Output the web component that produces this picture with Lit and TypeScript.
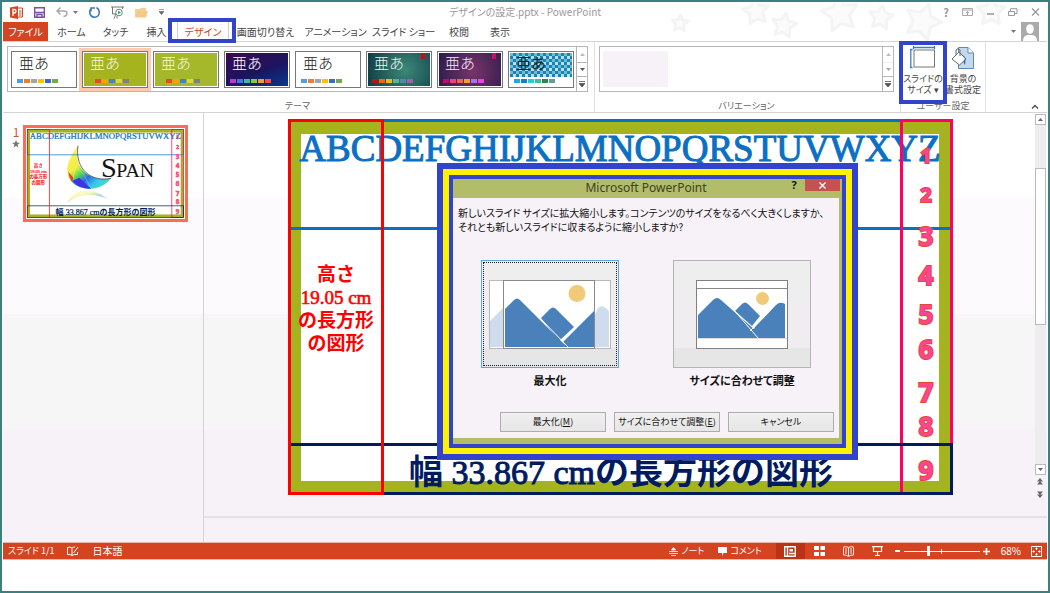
import { LitElement, html, css, svg } from 'lit';
import { customElement, property, state } from 'lit/decorators.js';
import { classMap } from 'lit/directives/class-map.js';
import { styleMap } from 'lit/directives/style-map.js';

const uiFont = css`'Noto Sans CJK JP', 'Noto Sans', sans-serif`;

const reset = css`
  *, *::before, *::after { box-sizing: border-box; }
  button {
    font: inherit; color: inherit; background: none; border: 0; padding: 0; margin: 0;
    display: flex; align-items: center; justify-content: center; white-space: nowrap;
  }
  svg { display: block; flex: none; }
`;

/* ---------- Slide ---------- */

const digits: [string, number][] = [
  ['1', 156], ['2', 195], ['3', 237], ['4', 276], ['5', 315], ['6', 350], ['7', 393], ['8', 427], ['9', 471],
];
const heightLabel: [string, number][] = [
  ['高さ', 281], ['19.05 cm', 304], ['の長方形', 327], ['の図形', 350],
];

@customElement('slide-view')
class SlideView extends LitElement {
  static styles = css`
    :host { display: block; }
    svg { display: block; width: 100%; height: auto; }
    .alphabet { font: 37px 'Liberation Serif', serif; fill: #0b70c4; stroke: #0b70c4; stroke-width: 1; }
    .tall { font: bold 19px 'Liberation Serif', 'Noto Sans CJK JP', serif; fill: #f00; }
    .wide { font: bold 34px 'Liberation Serif', 'Noto Sans CJK JP', serif; fill: #001b60; }
    .tall.latin { font-weight: normal; stroke: #f00; stroke-width: .6; }
    .latin { font-weight: normal; stroke: #001b60; stroke-width: 1; }
    .digit { font: bold 26px 'Noto Sans', sans-serif; fill: #ff4496; stroke: #e2492d; stroke-width: 2; paint-order: stroke; }
    .digit.small { font-size: 20px; }
    .word { font: 84px 'Liberation Serif', serif; fill: #111; }
    .mid { text-anchor: middle; }
  `;
  render() {
    return html`<svg viewBox="288 119 665 376" role="img" aria-label="スライド 1">
      <defs>
        <linearGradient id="moon" x1="0" y1="0" x2="1" y2="1">
          <stop offset="0" stop-color="#fff27a" /><stop offset=".35" stop-color="#f2ec3c" />
          <stop offset=".47" stop-color="#58d84a" /><stop offset=".6" stop-color="#2a6be8" />
          <stop offset=".75" stop-color="#36c8f0" /><stop offset="1" stop-color="#4af08c" />
        </linearGradient>
      </defs>
      <rect x="290" y="121" width="661" height="372" fill="#a5b41e" />
      <rect x="301" y="134" width="638" height="347" fill="#fff" />
      <path d="M504 190 C440 270 440 350 530 370 C580 380 620 358 644 328 C560 345 480 290 504 190Z" fill="url(#moon)" />
      <path d="M478 345 L496 278 L530 315 L560 372" stroke="#fff" stroke-width="2" fill="none" opacity=".6" />
      <path d="M463 300 L484 326 L480 346 Q465 325 463 300Z" fill="#f0372a" />
      <path d="M480 338 L510 325 L560 372 C525 372 495 360 480 338Z" fill="#3a35e8" />
      <path d="M504 190 C490 290 560 345 644 328" fill="none" stroke="#333" stroke-width="3" />
      <path d="M460 432 C480 366 580 366 630 418 C570 386 510 392 460 432Z" fill="url(#moon)" opacity=".35" />
      <text class="word" x="602" y="321"><tspan font-size="120">S</tspan></text>
      <text class="word" x="666" y="321">PAN</text>
      <rect x="289.5" y="120.5" width="662" height="108" fill="none" stroke="#0b70c4" stroke-width="3" />
      <text class="alphabet mid" x="620" y="161">ABCDEFGHIJKLMNOPQRSTUVWXYZ</text>
      <rect x="901.5" y="120.5" width="50" height="373" fill="none" stroke="#ff0066" stroke-width="3" />
      ${digits.map(([d, y], i) => svg`<text class=${i < 2 ? 'digit small mid' : 'digit mid'} x="926" y=${i < 2 ? y + 7 : y + 9}>${d}</text>`)}
      <rect x="289.5" y="444.5" width="662" height="49" fill="none" stroke="#001b60" stroke-width="3" />
      <text class="wide mid" x="621" y="484">幅<tspan class="latin"> 33.867 cm</tspan>の長方形の図形</text>
      <rect x="289.5" y="120.5" width="93" height="373" fill="none" stroke="#f00" stroke-width="3" />
      ${heightLabel.map(([t, y]) => svg`<text class=${/\d/.test(t) ? 'tall latin mid' : 'tall mid'} x="336" y=${y}>${t}</text>`)}
    </svg>`;
  }
}

/* ---------- Scaling dialog ---------- */

const peaks = svg`
  <path d="M0 58 V35 L15 20 Q19 16 23 20 L66 58Z" fill="#4a81bb" />
  <path d="M37 31 L44 24 Q47 21 50 24 L62 36 L54 46Z" fill="#4a81bb" />
  <path d="M52 58 L57 47 L78 25 Q82 21 87 24 V58Z" fill="#4a81bb" />
  <path d="M35 29 L60 58 M52 51 L72 31" stroke="#fff" stroke-width="1" fill="none" />`;

@customElement('size-dialog')
class SizeDialog extends LitElement {
  @state() private choice = 'max';
  static styles = [reset, css`
    :host { display: block; font: 11px/14px ${uiFont}; font-feature-settings: 'palt'; color: #111; }
    .b1 { border: 6px solid #3344cc; }
    .b2 { border: 6px solid #fff200; }
    .b3 { border: 4px solid #3344cc; }
    .win { background: #b3bd69; padding: 0 3px 6px 0; }
    header { display: grid; grid-template-columns: 1fr auto 1fr; height: 19px; color: #3c3f26; font: 12px/18px 'Noto Sans', sans-serif; }
    header h2 { grid-column: 2; margin: 0; font: inherit; }
    .caps { display: flex; justify-content: flex-end; align-items: flex-start; gap: 4px; margin-right: -1px; }
    .help { width: 14px; height: 12px; font-weight: bold; font-size: 11px; color: #111; }
    .close { width: 35px; height: 12px; background: #c75050; color: #fff; }
    .body { background: #f7f2f7; padding: 8px 5px 6px; }
    p { margin: 0; height: 54px; font-size: 10px; white-space: nowrap; }
    .choices { display: grid; grid-template-columns: 138px 138px; justify-content: center; gap: 54px; }
    .choice { display: flex; flex-direction: column; align-items: center; gap: 5px; font-weight: bold; }
    .pic { width: 138px; height: 108px; border: 1px solid #b4b4b4; background: linear-gradient(#eee 0 25%, #f0edf0 50% 82%, #e6e6e6 82%); }
    .pic.on { border-color: #5aa8ea; outline: 1px dotted #222; outline-offset: -3px; }
    .actions { display: grid; grid-template-columns: repeat(3, 106px); justify-content: end; gap: 8px; margin-top: 25px; }
    .actions button { height: 20px; border: 1px solid #adadad; background: linear-gradient(#f0f0f0, #e6e6e6); font-size: 9px; }
  `];
  render() {
    return html`<div class="b1"><div class="b2"><div class="b3"><div class="win" role="dialog" aria-labelledby="t">
      <header>
        <h2 id="t">Microsoft PowerPoint</h2>
        <div class="caps">
          <button class="help" aria-label="ヘルプ">?</button>
          <button class="close" aria-label="閉じる"><svg width="7" height="7" viewBox="0 0 7 7"><path d="M.5 .5 6.500 6.500M6.500 .5 .5 6.500" stroke="#fff" stroke-width="1.400" /></svg></button>
        </div>
      </header>
      <div class="body">
        <p>新しいスライド サイズに拡大縮小します。コンテンツのサイズをなるべく大きくしますか、<br />それとも新しいスライドに収まるように縮小しますか?</p>
        <div class="choices">
          <div class="choice">
            <button class=${classMap({ pic: true, on: this.choice === 'max' })} aria-labelledby="c1" @click=${() => (this.choice = 'max')}>
              <svg width="122" height="69" viewBox="0 0 122 69">
                <rect x=".5" y=".5" width="121" height="68" fill="#fff" stroke="#b9b9b9" />
                <path d="M1 67V41L15 27V67ZM106 67V34L109 28Q113 24 118 29L120 31V67Z" fill="#cfdcee" />
                <rect x="14.500" y=".5" width="91" height="68" fill="#fff" stroke="#8a8a8a" />
                <circle cx="88" cy="13.500" r="8.500" fill="#f0ca78" />
                <path d="M16 67V29L25 20Q28 17 31 20L78 67Z" fill="#4a81bb" />
                <path d="M52 38 61 29Q64 26 67 29L85 47 70 61Z" fill="#4a81bb" />
                <path d="M74 62 105 31V67H77Z" fill="#4a81bb" />
                <path d="M49 36 80 68M73 62 88 47" stroke="#fff" stroke-width="1" />
              </svg>
            </button>
            <span id="c1">最大化</span>
          </div>
          <div class="choice">
            <button class=${classMap({ pic: true, on: this.choice === 'fit' })} aria-labelledby="c2" @click=${() => (this.choice = 'fit')}>
              <svg width="92" height="69" viewBox="0 0 92 69">
                <rect x=".5" y=".5" width="91" height="68" fill="#fff" stroke="#808080" />
                <path d="M1 8.500H91" stroke="#888" /><path d="M1 58.500H91" stroke="#ddd" />
                <circle cx="66.500" cy="18.500" r="6.500" fill="#f0ca78" />
                <g transform="translate(2 0)">${peaks}</g>
              </svg>
            </button>
            <span id="c2">サイズに合わせて調整</span>
          </div>
        </div>
        <div class="actions">
          <button><span>最大化(<u>M</u>)</span></button>
          <button><span>サイズに合わせて調整(<u>E</u>)</span></button>
          <button>キャンセル</button>
        </div>
      </div>
    </div></div></div></div>`;
  }
}

/* ---------- Ribbon galleries ---------- */

interface Theme { name: string; paper: string; ink: string; colors: string[]; inset?: boolean; tag?: string; on?: boolean; }
const office = ['#5b9bd5', '#ed7d31', '#a5a5a5', '#ffc000', '#3f68c8', '#70ad47'];
const span = ['#e84c22', '#ffa000', '#3f83c8', '#d8d83c', '#808080'];
const themes: Theme[] = [
  { name: 'Office', paper: '#fff', ink: '#222', colors: office },
  { name: 'Span', paper: '#a5b41e', ink: '#f4f6dc', colors: span, inset: true, on: true },
  { name: 'Basis', paper: '#a5b82a', ink: '#f4f6dc', colors: span, inset: true },
  { name: 'Ion', paper: 'linear-gradient(160deg, #3a0a50, #1c1460 55%, #063a8c)', ink: '#fff', colors: ['#b83cc8', '#3f78d8', '#3cb8a0', '#8cc83c', '#f0a028', '#f05038'] },
  { name: 'White', paper: '#fff', ink: '#222', colors: office },
  { name: 'Ion Green', paper: 'radial-gradient(circle at 60% 50%, #3c8878, #0f3c46)', ink: '#e8f4f0', colors: ['#b81414', '#f06414', '#f0b428', '#64b090', '#5088a8', '#a060a8'], tag: '#c01010' },
  { name: 'Ion Boardroom', paper: 'radial-gradient(circle at 55% 55%, #78346c, #2a1c48)', ink: '#f4e8f4', colors: ['#b81064', '#f04080', '#f06440', '#f09c30', '#a070f8', '#f040e0'], tag: '#c01068' },
  { name: 'Integral', paper: 'conic-gradient(#1884b0 25%, #b8e0f0 0 50%, #1884b0 0 75%, #70bcd8 0) 0 0 / 6px 6px', ink: '#10242c', colors: ['#20a8e8', '#1880c8', '#20d0d8', '#40c090', '#308848', '#60a098'] },
];

@customElement('gallery-box')
class GalleryBox extends LitElement {
  @property({ attribute: false }) themes: Theme[] = [];
  @property({ type: Boolean }) empty = false;
  static styles = [reset, css`
    :host { display: flex; height: 46px; border: 1px solid #b6b6b6; background: #fff; }
    .list { display: flex; flex: 1; gap: 5px; padding: 0 0 0 3px; align-items: center; }
    .theme { position: relative; width: 66px; height: 37px; border: 1px solid #777; padding: 1px; }
    .theme.on { outline: 3px solid #fbcbb0; }
    .paper { width: 100%; height: 100%; display: flex; flex-direction: column; align-items: flex-start; padding: 1px 5px 0 6px; }
    .paper.pattern { height: 24px; align-self: flex-start; }
    .sample { font: 300 15px/17px 'Noto Sans CJK JP', sans-serif; }
    .pattern .sample { font-weight: 400; }
    .dots { position: absolute; left: 5px; bottom: 4px; display: flex; gap: 1px; }
    .dots.inset { left: 12px; }
    .dots i { width: 6px; height: 4px; }
    .tag { position: absolute; right: 6px; top: 1px; width: 4px; height: 6px; }
    .scroll { display: grid; grid-template-rows: 1fr 1fr 1fr; width: 11px; border-left: 1px solid #b6b6b6; }
    .scroll button + button { border-top: 1px solid #b6b6b6; }
    .scroll.off button:nth-child(2) { border-color: #e0e0e0; opacity: .5; }
    .ghost { width: 65px; height: 36px; background: #f7f2f7; }
  `];
  render() {
    return html`
      <div class="list">
        ${this.empty
          ? html`<div class="ghost"></div>`
          : this.themes.map((t) => html`
            <button class=${classMap({ theme: true, on: !!t.on })} aria-label=${t.name}>
              <span class=${classMap({ paper: true, pattern: t.name === 'Integral' })} style=${styleMap({ background: t.paper, color: t.ink })}>
                <span class="sample">亜あ</span>
              </span>
              <span class=${classMap({ dots: true, inset: !!t.inset })}>${t.colors.map((c) => html`<i style=${styleMap({ background: c })}></i>`)}</span>
              ${t.tag ? html`<span class="tag" style=${styleMap({ background: t.tag })}></span>` : ''}
            </button>`)}
      </div>
      <div class=${classMap({ scroll: true, off: this.empty })}>
        <button aria-label="前の行"><svg width="5" height="3"><path d="M0 3 2.500 0 5 3Z" fill="#bbb" /></svg></button>
        <button aria-label="次の行"><svg width="5" height="3"><path d="M0 0 2.500 3 5 0Z" fill="#555" /></svg></button>
        <button aria-label="その他"><svg width="6" height="6"><path d="M0 .5H6M0 2.500 3 6 6 2.500Z" stroke="#555" stroke-width=".8" fill="#555" /></svg></button>
      </div>`;
  }
}

/* ---------- Application ---------- */

const star = (x: number, y: number, s: number, r: number) => svg`
  <path transform="translate(${x} ${y}) rotate(${r}) scale(${s})" stroke-width=${3 / s} stroke-linejoin="round"
    d="M0-10 3-4 10-3 5 2 6 9 0 6-6 9-5 2-10-3-3-4Z" />`;

@customElement('app-root')
class AppRoot extends LitElement {
  @state() private zoom = 32;
  static styles = [reset, css`
    :host { display: block; font: 11px/14px ${uiFont}; font-feature-settings: 'palt'; color: #444; }
    .frame { position: relative; display: flex; flex-direction: column; min-height: 100vh; border: 2px solid #3b8080; padding: 0 1px; background: #fff; }
    .stars { position: absolute; top: 1px; right: 20px; width: 380px; height: 39px; fill: #fbfbfb; stroke: #f4f4f4; }

    .title { position: relative; display: grid; grid-template-columns: 1fr auto 1fr; align-items: center; height: 20px; }
    .title h1 { margin: 0; font: inherit; font-size: 10px; color: #999; }
    .quick { display: flex; align-items: center; gap: 11px; padding-left: 7px; }
    .undo { gap: 5px; }
    .caption { display: flex; align-items: center; justify-content: flex-end; gap: 13px; padding-right: 7px; color: #999; }

    .tabs { position: relative; display: flex; justify-content: space-between; height: 19px; z-index: 1; }
    nav { display: grid; grid-template-columns: 45px 47px 41px 41px 52px 73px 67px 69px 42px 40px; font-size: 10px; }
    nav .file { background: #d44420; color: #fff; }
    nav .on { color: #d44420; border: solid #d0d0d0; border-width: 0 1px; }
    .user { display: flex; align-items: center; gap: 5px; padding-right: 8px; background: #fff; }
    .mark { position: absolute; border: 4px solid #3344cc; pointer-events: none; }
    .mark.tab { left: 165px; top: -4px; width: 68px; height: 25px; }
    .mark.size { left: -2px; top: -1px; width: 48px; height: 63px; }

    .ribbon { display: flex; border-top: 1px solid #d4d4d4; border-bottom: 1px solid #d4d4d4; height: 72px; color: #555; font-size: 10px; position: relative; }
    .group { display: flex; flex-direction: column; justify-content: space-between; padding: 4px 6px 0 4px; border-right: 1px solid #e1e1e1; }
    .group.themes { width: 592px; }
    .group.variants { flex: 1; }
    .group.custom { width: 85px; padding: 0 2px; position: relative; }
    .name { text-align: center; line-height: 13px; color: #666; font-size: 9px; }
    .big { display: flex; color: #444; font-size: 9px; }
    .big button { flex-direction: column; justify-content: flex-start; gap: 3px; width: 40px; padding-top: 4px; line-height: 11px; }
    .big svg.icon { height: 24px; }
    .fold { width: 61px; display: flex; justify-content: flex-end; align-items: flex-end; padding: 0 8px 3px 0; }

    .work { flex: 1; display: flex; min-height: 0; background: linear-gradient(#fff 0 85px, #fdfafd 85px 201px, #f6f6f6 201px 316px, #f7f2f7 316px); }
    aside { width: 201px; border-right: 1px solid #d6d3d6; display: flex; align-items: flex-start; gap: 2px; padding: 12px 15px 0 8px; }
    .num { width: 10px; font-size: 12px; color: #e0502e; text-align: center; display: grid; justify-items: center; gap: 1px; }
    .thumb { flex: 1; border: 3px solid #f76e50; padding: 1px; background: #fff; }
    .stage { flex: 1; display: flex; flex-direction: column; }
    .canvas { flex: 1; display: flex; }
    .paperarea { flex: 1; display: flex; align-items: flex-start; padding: 6px 81px 0 84px; }
    .paperarea slide-view { flex: 1; }
    .notes { height: 26px; border-top: 2px solid #e4e1e4; }
    .bar { width: 13px; display: flex; flex-direction: column; align-items: center; padding: 1px 1px 15px 0; }
    .bar button { width: 11px; height: 11px; }
    .bar .step { border: 1px solid #bbb; background: #fff; }
    .bar .jump { height: 13px; }
    .track { flex: 1; width: 11px; background: #eeecef; padding-top: 43px; }
    .knob { height: 157px; border: 1px solid #bbb; background: #fff; }

    .status { display: flex; align-items: center; justify-content: space-between; height: 18px; background: #d44420; border-top: 1px solid #eab9ad; border-bottom: 1px solid #eab9ad; color: #fff; font-size: 9px; }
    .left { display: flex; align-items: center; gap: 13px; padding-left: 5px; }
    .lang { font-size: 10px; }
    .right { display: flex; align-items: center; padding-right: 5px; height: 100%; }
    .right .txt { gap: 3px; margin-right: 14px; }
    .view { width: 29px; height: 16px; }
    .view.on { background: #b93416; }
    .zoom { display: flex; align-items: center; gap: 3px; margin: 0 11px 0 3px; }
    input[type='range'] { appearance: none; width: 76px; height: 12px; margin: 0; background: linear-gradient(#fff, #fff) 50% 50% / 100% 1px no-repeat, linear-gradient(#fff, #fff) 50% 50% / 1px 5px no-repeat; }
    input[type='range']::-webkit-slider-thumb { appearance: none; width: 3px; height: 10px; background: #fff; }
    .pct { margin-right: 10px; font-size: 10px; }
    .blank { height: 31px; }
    size-dialog { position: absolute; left: 435px; top: 161px; width: 421px; }
  `];

  render() {
    const tabs = ['ファイル', 'ホーム', 'タッチ', '挿入', 'デザイン', '画面切り替え', 'アニメーション', 'スライド ショー', '校閲', '表示'];
    const caret = html`<svg width="5" height="3"><path d="M0 0H5L2.500 3Z" fill="#777" /></svg>`;
    return html`<div class="frame">
      <svg class="stars" viewBox="647 0 380 39" aria-hidden="true">
        ${star(679, 20, .8, 5)}${star(755, 8, 1.3, -8)}${star(783, 22, 1.2, 10)}${star(839, 10, 1.8, -10)}${star(880, 14, 1.2, 8)}${star(922, 18, 1.8, 20)}${star(990, 8, 1.4, 0)}
      </svg>
      <header class="title">
        <div class="quick">
          <svg width="13" height="13" viewBox="0 0 13 13"><path d="M7 2H12.500V11H7" fill="#fff" stroke="#d24726" /><path d="M0 1.500 8 0V13L0 11.500Z" fill="#d24726" /><path d="M3 10V3.500H4.600Q6 3.500 6 5.200T4.600 7H3" fill="none" stroke="#fff" stroke-width="1.300" /><path d="M9 5H11.500M9 7H11.500M9 9H11.500" stroke="#d24726" /></svg>
          <button aria-label="上書き保存"><svg width="11" height="11" viewBox="0 0 11 11"><path d="M.7.7H10.300V10.300H.7Z" fill="#fff" stroke="#7a4fa8" stroke-width="1.400" /><path d="M1 5.500H10M3 10V7.500H8V10" fill="none" stroke="#7a4fa8" stroke-width="1.400" /></svg></button>
          <button class="undo" aria-label="元に戻す"><svg width="12" height="10" viewBox="0 0 12 10"><path d="M4.500.5 1 4 4.500 7.500M1 4H8Q11 4 11 6.500T7.500 9.500" fill="none" stroke="#a8a8a8" stroke-width="1.500" /></svg>${caret}</button>
          <button aria-label="繰り返し"><svg width="11" height="12" viewBox="0 0 11 12"><path d="M6 2H2V5.500M2 2.500Q.5 4 .8 7 1.500 11 5.500 11.200 10 11 10.300 6.500 10.300 3 7.500 1.500" fill="none" stroke="#3478b8" stroke-width="1.500" /></svg></button>
          <button aria-label="最初から"><svg width="13" height="13" viewBox="0 0 13 13"><path d="M0 1H13M1.500 1V8H5M11.500 1V3M5 8 3 12.500M6 10V12.500" fill="none" stroke="#777" /><circle cx="8" cy="6.500" r="3.300" fill="#fff" stroke="#5a8a78" /><path d="M7 4.800 10 6.500 7 8.200Z" fill="#3a9a6a" /></svg></button>
          <button aria-label="開く"><svg width="13" height="11" viewBox="0 0 13 11"><path d="M0 10V2H4.500L6 .8H11V4" fill="#f4cf94" /><path d="M2.500 4H13L11 10.500H0Z" fill="#f4c98a" /></svg></button>
          <button aria-label="クイック アクセス ツール バーのユーザー設定"><svg width="5" height="6"><path d="M0 .5H5M0 2.500H5L2.500 5.500Z" fill="#666" stroke="#666" stroke-width=".6" /></svg></button>
        </div>
        <h1>デザインの設定.pptx - PowerPoint</h1>
        <div class="caption">
          <button aria-label="ヘルプ"><b>?</b></button>
          <button aria-label="リボンの表示オプション"><svg width="11" height="8"><path d="M.5.5H10.500V7.500H.5ZM.5 2H10.500M5.500 7V3.500M4 5 5.500 3.500 7 5" fill="none" stroke="#aaa" /></svg></button>
          <button aria-label="最小化"><svg width="9" height="8"><path d="M1 6H8" stroke="#999" stroke-width="1.500" /></svg></button>
          <button aria-label="元に戻す (縮小)"><svg width="10" height="8"><path d="M.5 3.500H6.500V7.500H.5ZM2.500 3V.7H9V5.500H7" fill="none" stroke="#999" /></svg></button>
          <button aria-label="閉じる"><svg width="9" height="8"><path d="M1 .5 8 7.500M8 .5 1 7.500" stroke="#999" stroke-width="1.300" /></svg></button>
        </div>
      </header>
      <div class="tabs">
        <nav>${tabs.map((t, i) => html`<button class=${classMap({ file: i === 0, on: i === 4 })}>${t}</button>`)}</nav>
        <button class="user" aria-label="アカウント">${caret}<svg width="18" height="19" viewBox="0 0 18 19"><path d="M0 0H18V19H0Z" fill="#aaa" /><ellipse cx="9" cy="7" rx="3.800" ry="4.800" fill="#fff" /><path d="M2 19Q2 13.500 7 13H11Q16 13.500 16 19Z" fill="#fff" /></svg></button>
        <div class="mark tab"></div>
      </div>
      <section class="ribbon">
        <div class="group themes"><gallery-box .themes=${themes}></gallery-box><div class="name">テーマ</div></div>
        <div class="group variants"><gallery-box empty></gallery-box><div class="name">バリエーション</div></div>
        <div class="group custom">
          <div class="big">
            <button><svg class="icon" width="26" height="24" viewBox="0 0 26 24"><path d="M3.500 1.500H24.500M3.500 0V3M24.500 0V3M.8 3.500V21.500M0 3.500H2.500M0 21.500H2.500" stroke="#3a80c4" stroke-width="1.300" /><rect x="4" y="4" width="20.500" height="17" fill="#fff" stroke="#777" /></svg>
              <span>スライドの<br />サイズ ▾</span></button>
            <button><svg class="icon" width="24" height="24" viewBox="0 0 24 24"><path d="M7.500 1.500H17L22.500 7V22.500H7.500Z" fill="#c6d8ee" stroke="#5f87b5" /><path d="M17 1.500V7H22.500" fill="#fff" stroke="#5f87b5" /><path d="M1 13 8 6 15 13 8.500 19Z" fill="#fff" stroke="#666" /><path d="M5 9V4Q7 1 9 4V10" fill="none" stroke="#666" /><path d="M11 9Q16 10 14 19 11 16 14 13Z" fill="#2e75b6" /></svg>
              <span>背景の<br />書式設定</span></button>
          </div>
          <div class="name">ユーザー設定</div>
          <div class="mark size"></div>
        </div>
        <div class="fold"><button aria-label="リボンを折りたたむ"><svg width="8" height="5"><path d="M1 4.500 4 1.500 7 4.500" fill="none" stroke="#555" stroke-width="1.500" /></svg></button></div>
      </section>
      <main class="work">
        <aside>
          <div class="num">1<svg width="8" height="8" viewBox="-10 -10 20 20"><path d="M0-10 3-3H10L4 2 6 9 0 5-6 9-4 2-10-3H-3Z" fill="#777" /></svg></div>
          <div class="thumb"><slide-view></slide-view></div>
        </aside>
        <div class="stage">
          <div class="canvas">
            <div class="paperarea"><slide-view></slide-view></div>
            <div class="bar">
              <button class="step" aria-label="上へ"><svg width="5" height="3"><path d="M0 3 2.500 0 5 3Z" fill="#666" /></svg></button>
              <div class="track"><div class="knob"></div></div>
              <button class="step" aria-label="下へ"><svg width="5" height="3"><path d="M0 0 2.500 3 5 0Z" fill="#666" /></svg></button>
              <button class="jump" aria-label="前のスライド"><svg width="6" height="7"><path d="M0 3.500 3 0 6 3.500ZM0 6.500 3 3 6 6.500Z" fill="#666" /></svg></button>
              <button class="jump" aria-label="次のスライド"><svg width="6" height="7"><path d="M0 .5 3 4 6 .5ZM0 3.500 3 7 6 3.500Z" fill="#666" /></svg></button>
            </div>
          </div>
          <div class="notes"></div>
        </div>
      </main>
      <footer class="status">
        <div class="left">
          <span>スライド 1/1</span>
          <button aria-label="スペル チェック"><svg width="12" height="11" viewBox="0 0 12 11"><path d="M5 2Q3 .5.5 1.500V8.500Q3 8 5 9.500V2Q6 .8 8 1M5 9.500Q7 8 10.500 8.500V6M6.500 7 11 1" fill="none" stroke="#fff" /></svg></button>
          <span class="lang">日本語</span>
        </div>
        <div class="right">
          <button class="txt"><svg width="9" height="9"><path d="M2.500 3 4.500 .5 6.500 3ZM0 4.500H9M0 6.500H9M2 8.500H7" fill="#fff" stroke="#fff" stroke-width=".8" /></svg>ノート</button>
          <button class="txt"><svg width="9" height="9"><path d="M0 0H9V6H5.500L4 9V6H0Z" fill="#fff" /></svg>コメント</button>
          <button class="view on" aria-label="標準"><svg width="12" height="11"><path d="M.7.7H11.300V10.300H.7ZM3.500 1V10M5 7.500H11" fill="none" stroke="#fff" stroke-width="1.400" /><path d="M5.500 3H9V5.500H5.500Z" fill="#fff" /></svg></button>
          <button class="view" aria-label="スライド一覧"><svg width="11" height="10"><path d="M0 0H5V4H0ZM6.500 0H11V4H6.500ZM0 6H5V10H0ZM6.500 6H11V10H6.500Z" fill="#fff" /></svg></button>
          <button class="view" aria-label="閲覧表示"><svg width="11" height="11"><path d="M5.500 1.500Q3 0 .5 1V9Q3 8.500 5.500 10.500 8 8.500 10.500 9V1Q8 0 5.500 1.500V10M2 3H4M2 5H4M2 7H4M7 3H9M7 5H9M7 7H9" fill="none" stroke="#fff" stroke-width=".9" /></svg></button>
          <button class="view" aria-label="スライド ショー"><svg width="11" height="10"><path d="M0 .7H11M1.500 1V5.500H9.500V1M5.500 6V9M3 9.500H8" fill="none" stroke="#fff" stroke-width="1.200" /></svg></button>
          <div class="zoom">
            <button aria-label="縮小"><svg width="6" height="6"><path d="M0 3H5" stroke="#fff" stroke-width="2" /></svg></button>
            <input type="range" aria-label="ズーム" min="0" max="100" .value=${String(this.zoom)} @input=${(e: Event) => (this.zoom = +(e.target as HTMLInputElement).value)} />
            <button aria-label="拡大"><svg width="7" height="7"><path d="M0 3.500H7M3.500 0V7" stroke="#fff" stroke-width="1.600" /></svg></button>
          </div>
          <span class="pct">68%</span>
          <button aria-label="ウィンドウに合わせる"><svg width="11" height="11"><path d="M.5.5H10.500V10.500H.5Z" fill="none" stroke="#fff" /><path d="M5.500 1.500V4M5.500 7V9.500M1.500 5.500H4M7 5.500H9.500M4.500 2.500H6.500M4.500 8.500H6.500M2.500 4.500V6.500M8.500 4.500V6.500" stroke="#fff" /></svg></button>
        </div>
      </footer>
      <div class="blank"></div>
      <size-dialog></size-dialog>
    </div>`;
  }
}
